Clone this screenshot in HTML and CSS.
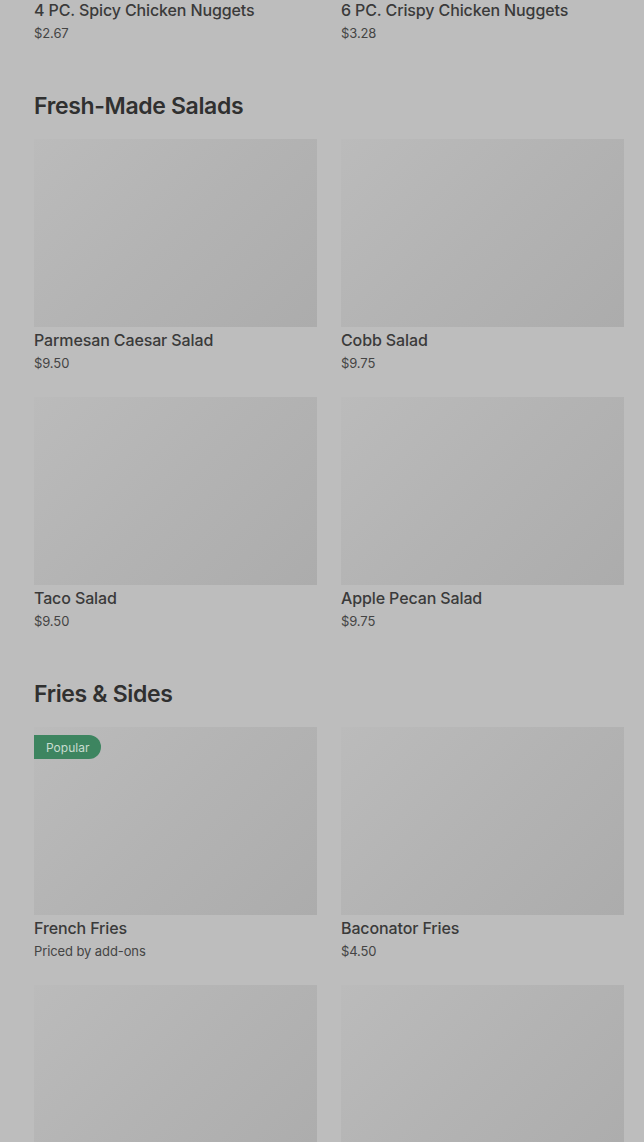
FILE: index.html
```html
<!DOCTYPE html>
<html lang="en">
<head>
<meta charset="utf-8">
<title>Menu</title>
<link rel="stylesheet" href="styles.css">
</head>
<body>
<main class="menu">
  <section class="section section-first">
    <div class="grid">
      <article class="card">
        <div class="thumb"></div>
        <h3 class="name">4 PC. Spicy Chicken Nuggets</h3>
        <p class="price">$2.67</p>
      </article>
      <article class="card">
        <div class="thumb"></div>
        <h3 class="name">6 PC. Crispy Chicken Nuggets</h3>
        <p class="price">$3.28</p>
      </article>
    </div>
  </section>

  <section class="section">
    <h2 class="heading">Fresh-Made Salads</h2>
    <div class="grid">
      <article class="card">
        <div class="thumb"></div>
        <h3 class="name">Parmesan Caesar Salad</h3>
        <p class="price">$9.50</p>
      </article>
      <article class="card">
        <div class="thumb"></div>
        <h3 class="name">Cobb Salad</h3>
        <p class="price">$9.75</p>
      </article>
      <article class="card">
        <div class="thumb"></div>
        <h3 class="name">Taco Salad</h3>
        <p class="price">$9.50</p>
      </article>
      <article class="card">
        <div class="thumb"></div>
        <h3 class="name">Apple Pecan Salad</h3>
        <p class="price">$9.75</p>
      </article>
    </div>
  </section>

  <section class="section">
    <h2 class="heading">Fries &amp; Sides</h2>
    <div class="grid">
      <article class="card">
        <div class="thumb"><span class="badge">Popular</span></div>
        <h3 class="name">French Fries</h3>
        <p class="price">Priced by add-ons</p>
      </article>
      <article class="card">
        <div class="thumb"></div>
        <h3 class="name">Baconator Fries</h3>
        <p class="price">$4.50</p>
      </article>
      <article class="card">
        <div class="thumb"></div>
      </article>
      <article class="card">
        <div class="thumb"></div>
      </article>
    </div>
  </section>
</main>
</body>
</html>
```

FILE: styles.css
```css
* { box-sizing: border-box; }

html, body {
  margin: 0;
  padding: 0;
  background: #bdbdbd;
  overflow: hidden;
}

body {
  font-family: Inter, "Noto Sans", "Liberation Sans", sans-serif;
  color: #383838;
}

.menu {
  padding: 0 20px 0 34px;
}

.section-first {
  margin-top: -191px;
}

.section {
  margin-bottom: 47px;
}

.heading {
  margin: 0 0 17px;
  font-size: 23px;
  line-height: 32px;
  font-weight: 600;
  letter-spacing: -0.35px;
  color: #303030;
}

.grid {
  display: grid;
  grid-template-columns: 283px 283px;
  column-gap: 24px;
  row-gap: 24px;
}

.card {
  display: flex;
  flex-direction: column;
}

.thumb {
  position: relative;
  height: 188px;
  background: linear-gradient(135deg, #bbbbbb 0%, #b3b3b3 50%, #acacac 100%);
}

.badge {
  position: absolute;
  left: 0;
  top: 8px;
  height: 24px;
  padding: 0 12px;
  display: flex;
  align-items: center;
  background: #3d8560;
  color: #c9dcd0;
  font-size: 12px;
  font-weight: 400;
  border-radius: 0 12px 12px 0;
}

.name {
  margin: 3px 0 0;
  font-size: 16px;
  line-height: 20px;
  font-weight: 500;
  letter-spacing: -0.12px;
  color: #3a3a3a;
}

.price {
  margin: 3px 0 0;
  font-size: 13px;
  line-height: 20px;
  font-weight: 400;
  letter-spacing: -0.1px;
  color: #444444;
}
```
